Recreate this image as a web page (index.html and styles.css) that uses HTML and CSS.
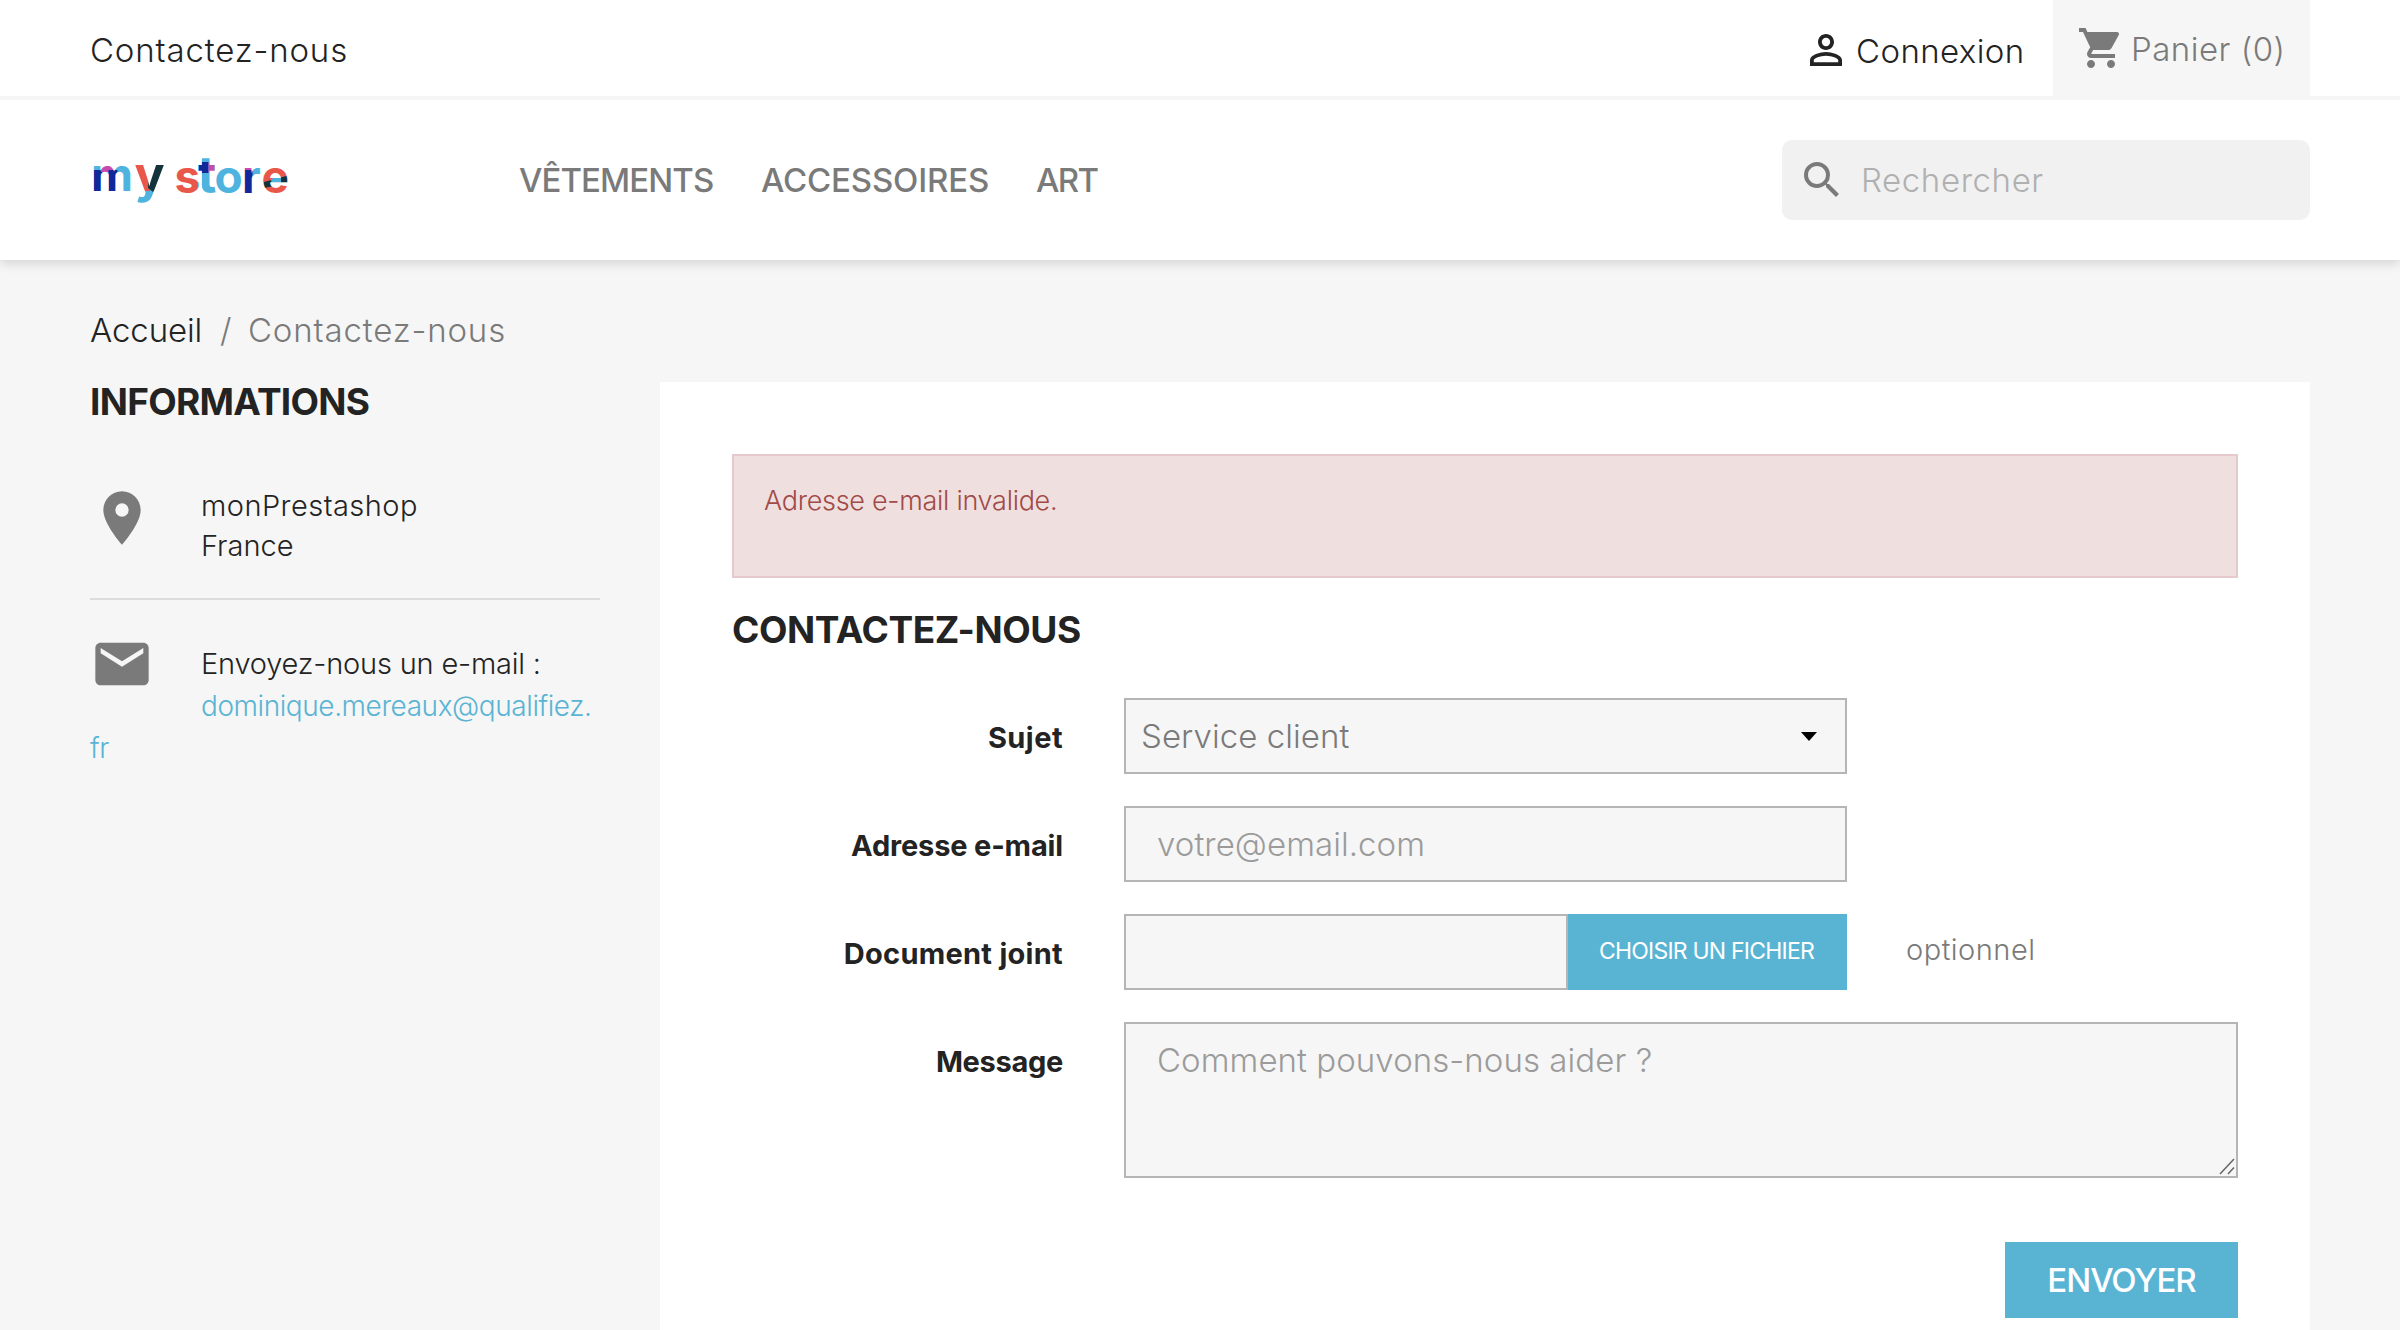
FILE: index.html
```html
<!DOCTYPE html>
<html lang="fr">
<head>
<meta charset="utf-8">
<title>Contactez-nous</title>
<link rel="stylesheet" href="styles.css">
</head>
<body>
<header class="header">
  <nav class="topbar">
    <a class="topbar-contact">Contactez-nous</a>
    <div class="topbar-right">
      <a class="login">
        <svg class="icon" viewBox="0 0 24 24"><path d="M12 5.9a2.1 2.1 0 1 1 0 4.2 2.1 2.1 0 0 1 0-4.2m0 9c2.97 0 6.1 1.46 6.1 2.1v1.1H5.9V17c0-.64 3.13-2.1 6.1-2.1M12 4C9.79 4 8 5.79 8 8s1.79 4 4 4 4-1.79 4-4-1.79-4-4-4zm0 9c-2.67 0-8 1.34-8 4v3h16v-3c0-2.66-5.33-4-8-4z"/></svg>
        <span class="login-text">Connexion</span>
      </a>
      <div class="cart">
        <svg class="icon" viewBox="0 0 24 24"><path d="M7 18c-1.1 0-1.99.9-1.99 2S5.9 22 7 22s2-.9 2-2-.9-2-2-2zM1 2v2h2l3.6 7.59-1.35 2.45c-.16.28-.25.61-.25.96 0 1.1.9 2 2 2h12v-2H7.42c-.14 0-.25-.11-.25-.25l.03-.12.9-1.63h7.45c.75 0 1.41-.41 1.75-1.03l3.58-6.49A1.003 1.003 0 0 0 20 4H5.21l-.94-2H1zm16 16c-1.1 0-1.99.9-1.99 2s.89 2 1.99 2 2-.9 2-2-.9-2-2-2z"/></svg>
        <span class="cart-text">Panier (0)</span>
      </div>
    </div>
  </nav>
  <div class="header-main">
    <a class="logo">
      <svg width="230" height="100" viewBox="-10 -20 230 100" role="img">
        <defs>
          <pattern id="ink" patternUnits="userSpaceOnUse" x="-10" y="-20" width="230" height="100">
            <g transform="translate(10 20)">
            <rect x="-10" y="-20" width="230" height="100" fill="#4fb3df"/>
            <rect x="3.500" y="20" width="9" height="24" fill="#10289a"/>
            <rect x="11" y="12" width="12" height="10" fill="#c64bb0"/>
            <rect x="18.500" y="20" width="9" height="24" fill="#10289a"/>
            <rect x="44" y="12" width="16" height="29" fill="#e9564a"/>
            <path d="M60 12h14v14L63 42l-5-4z" fill="#14343b"/>
            <rect x="84" y="10" width="24" height="36" fill="#e9564a"/>
            <rect x="109" y="12" width="9.500" height="11" fill="#10289a"/>
            <rect x="118.500" y="12" width="6" height="11" fill="#c64bb0"/>
            <rect x="152" y="12" width="10.500" height="8" fill="#c64bb0"/>
            <rect x="152" y="20" width="10.500" height="26" fill="#10289a"/>
            <rect x="172.500" y="12" width="32" height="36" fill="#e9564a"/>
            <path d="M174 32l26-7v8l-26 5z" fill="#14343b"/>
            <path d="M181 29l10-3v8l-9 3z" fill="#4fb3df"/>
            </g>
          </pattern>
        </defs>
        <text class="logo-text" y="40.7" fill="url(#ink)"><tspan x="1">m</tspan><tspan x="44.500" class="logo-y" y="42">y</tspan><tspan x="84.500" y="42.500">s</tspan><tspan x="107.500" y="42.500" class="logo-t">t</tspan><tspan x="124.500" y="42.500">o</tspan><tspan x="152" y="42.500">r</tspan><tspan x="171.500" y="43">e</tspan></text>
      </svg>
    </a>
    <nav class="menu">
      <a class="menu-clothes">VÊTEMENTS</a>
      <a class="menu-accessories">ACCESSOIRES</a>
      <a class="menu-art">ART</a>
    </nav>
    <form class="search">
      <svg class="icon" viewBox="0 0 24 24"><path d="M15.5 14h-.79l-.28-.27A6.471 6.471 0 0 0 16 9.5 6.5 6.5 0 1 0 9.5 16c1.61 0 3.09-.59 4.23-1.57l.27.28v.79l5 4.99L20.49 19l-4.99-5zm-6 0C7.01 14 5 11.99 5 9.5S7.01 5 9.5 5 14 7.01 14 9.5 11.99 14 9.5 14z"/></svg>
      <input class="search-input" type="text" placeholder="Rechercher">
    </form>
  </div>
</header>

<div class="breadcrumb"><a class="crumb-home">Accueil</a><span class="crumb-sep">/</span><span class="crumb-here">Contactez-nous</span></div>

<div class="columns">
  <aside class="sidebar">
    <h4 class="sidebar-title">INFORMATIONS</h4>
    <div class="address">
      <svg class="big-icon" viewBox="0 0 24 24"><path d="M12 2C8.13 2 5 5.13 5 9c0 5.25 7 13 7 13s7-7.75 7-13c0-3.87-3.13-7-7-7zm0 9.500a2.5 2.5 0 0 1 0-5 2.5 2.5 0 0 1 0 5z"/></svg>
      <div class="address-text"><span class="shop">monPrestashop</span><br>France</div>
    </div>
    <div class="email">
      <svg class="big-icon email-icon" viewBox="0 0 24 24"><path d="M20 4H4c-1.1 0-1.99.9-1.99 2L2 18c0 1.100.9 2 2 2h16c1.100 0 2-.9 2-2V6c0-1.100-.9-2-2-2zm0 4l-8 5-8-5V6l8 5 8-5v2z"/></svg>
      <div class="email-label">Envoyez-nous un e-mail :</div>
      <a class="email-link">dominique.mereaux@qualifiez.<br>fr</a>
    </div>
  </aside>

  <main class="content">
    <div class="alert">Adresse e-mail invalide.</div>
    <h3 class="title">CONTACTEZ-NOUS</h3>
    <form class="form">
      <div class="row">
        <label class="label label-subject">Sujet</label>
        <div class="select">
          <span class="select-value">Service client</span>
          <svg class="caret" width="16" height="9" viewBox="0 0 16 9"><path d="M0 0h16L8 9z"/></svg>
        </div>
      </div>
      <div class="row">
        <label class="label label-email">Adresse e-mail</label>
        <input class="field" type="text" placeholder="votre@email.com">
      </div>
      <div class="row">
        <label class="label label-file">Document joint</label>
        <div class="file">
          <span class="file-name"></span>
          <span class="file-button">CHOISIR UN FICHIER</span>
        </div>
        <span class="optional">optionnel</span>
      </div>
      <div class="row">
        <label class="label label-message">Message</label>
        <div class="message">
          <textarea class="field textarea" placeholder="Comment pouvons-nous aider ?"></textarea>
          <svg class="grip" width="16" height="17" viewBox="0 0 16 17"><path d="M1 16L15 1M9 16l6-6.500" fill="none" stroke="#666" stroke-width="1.500"/></svg>
        </div>
      </div>
      <div class="actions"><button class="submit" type="button">ENVOYER</button></div>
    </form>
  </main>
</div>
</body>
</html>
```
FILE: styles.css
```css
* { box-sizing: border-box; }

body {
  margin: 0;
  height: 1330px;
  overflow: hidden;
  background: #f6f6f6;
  color: #232323;
  font-family: Inter, "Liberation Sans", sans-serif;
  font-size: 33px;
  font-weight: 300;
  line-height: 40px;
}

h3, h4 {
  margin: 0;
  font-size: 37px;
  font-weight: 650;
}

/* Header */
.header {
  height: 260px;
  background: #fff;
  box-shadow: 0 4px 10px rgba(0, 0, 0, .13);
}

.topbar {
  display: flex;
  justify-content: space-between;
  height: 100px;
  padding: 0 90px;
  border-bottom: 4px solid #f6f6f6;
}

.topbar-contact {
  padding-top: 30px;
  letter-spacing: .85px;
}

.topbar-right { display: flex; }

.icon {
  display: block;
  flex: none;
  width: 48px;
  height: 48px;
  fill: #7a7a7a;
}

.login {
  display: flex;
  width: 251px;
  padding-top: 26px;
}

.login .icon { fill: #232323; }

.login-text {
  padding: 5px 0 0 6px;
  letter-spacing: .4px;
}

.cart {
  display: flex;
  width: 257px;
  height: 100px;
  padding: 24px 0 0 24px;
  background: #f6f6f6;
  color: #7a7a7a;
}

.cart-text {
  padding: 5px 0 0 6px;
  letter-spacing: .5px;
  white-space: nowrap;
}

.header-main {
  display: flex;
  align-items: center;
  height: 160px;
  padding: 0 90px 0 80px;
}

.logo {
  display: block;
  width: 439px;
  height: 100px;
}

.logo svg { display: block; }

.logo-text {
  font-family: Inter, sans-serif;
  font-size: 46px;
  font-weight: 750;
}

.logo-y { font-size: 50px; }
.logo-t { font-size: 52px; font-weight: 700; }

.menu {
  display: flex;
  gap: 48px;
  flex: 1;
  color: #7a7a7a;
  font-weight: 500;
}

.menu-clothes { width: 194px; letter-spacing: -.91px; }
.menu-accessories { width: 227px; letter-spacing: -.17px; }
.menu-art { letter-spacing: -1.6px; }

.search {
  display: flex;
  align-items: center;
  width: 528px;
  height: 80px;
  padding: 0 16px;
  border-radius: 10px;
  background: #f1f1f1;
}

.search-input {
  flex: 1;
  min-width: 0;
  padding: 0 0 0 15px;
  border: 0;
  background: none;
  font: inherit;
  letter-spacing: .6px;
}

.search-input::placeholder { color: #b0b0b0; opacity: 1; }

/* Breadcrumb */
.breadcrumb {
  display: flex;
  height: 122px;
  padding: 50px 90px 0;
  color: #7a7a7a;
}

.crumb-home { width: 130px; color: #232323; letter-spacing: -.1px; }
.crumb-sep { width: 28px; }
.crumb-here { letter-spacing: .85px; }

/* Columns */
.columns {
  display: grid;
  grid-template-columns: 510px 1650px;
  column-gap: 60px;
  padding: 0 90px;
}

.sidebar { font-size: 29px; }

.sidebar-title {
  margin-bottom: 65px;
  line-height: 39px;
  letter-spacing: -.72px;
}

.big-icon {
  flex: none;
  width: 64px;
  height: 64px;
  fill: #7a7a7a;
}

.address {
  display: flex;
  gap: 47px;
  height: 114px;
  border-bottom: 2px solid #dcdcdc;
}

.address-text { font-weight: 350; }
.shop { letter-spacing: .45px; }

.email {
  padding-top: 43px;
  line-height: 42px;
}

.email-icon {
  float: left;
  margin: -11px 47px 24px 0;
}

.email-label {
  font-weight: 350;
  letter-spacing: -.2px;
  white-space: nowrap;
}

.email-link {
  color: #59b4d4;
  font-size: 28px;
  letter-spacing: -.43px;
}

/* Contact form */
.content {
  height: 960px;
  padding: 72px;
  background: #fff;
}

.alert {
  height: 124px;
  padding: 25px 30px;
  border: 2px solid #e6c9cc;
  background: #f0dfdf;
  color: #a14b48;
  font-size: 27px;
  letter-spacing: -.29px;
}

.title {
  margin: 30px 0 47px;
  line-height: 43px;
  letter-spacing: -.42px;
}

.form {
  display: flex;
  flex-direction: column;
  gap: 32px;
}

.row { display: flex; }

.label {
  width: 331px;
  margin-right: 61px;
  padding-top: 20px;
  font-size: 29px;
  font-weight: 650;
  text-align: right;
}

.label-subject { letter-spacing: .46px; }
.label-email { letter-spacing: -.16px; }
.label-file { letter-spacing: .28px; }
.label-message { letter-spacing: -.3px; }

.select,
.field {
  width: 723px;
  height: 76px;
  border: 2px solid #b5b5b5;
  border-radius: 0;
  background: #f6f6f6;
  color: #7a7a7a;
  font: inherit;
  letter-spacing: .06px;
}

.select {
  display: flex;
  align-items: center;
  justify-content: space-between;
  padding: 0 28px 0 15px;
}

.field { padding: 0 31px; }
.field::placeholder { color: #9b9b9b; opacity: 1; }

.file {
  display: flex;
  width: 723px;
  height: 76px;
}

.file-name {
  width: 444px;
  border: 2px solid #b5b5b5;
  background: #f6f6f6;
}

.file-button {
  flex: 1;
  padding: 17px 0 0 31px;
  background: #59b4d4;
  color: #fff;
  font-size: 23px;
  font-weight: 400;
  letter-spacing: -.79px;
}

.optional {
  padding: 16px 0 0 59px;
  color: #7a7a7a;
  font-size: 29px;
  letter-spacing: .5px;
}

.message {
  position: relative;
  width: 1114px;
  height: 156px;
}

.textarea {
  display: block;
  width: 100%;
  height: 100%;
  padding-top: 16px;
  resize: none;
}

.grip {
  position: absolute;
  right: 3px;
  bottom: 3px;
}

.actions {
  display: flex;
  justify-content: flex-end;
  margin-top: 32px;
}

.submit {
  width: 233px;
  height: 76px;
  padding: 0;
  border: 0;
  background: #59b4d4;
  color: #fff;
  font: inherit;
  font-weight: 500;
  letter-spacing: -1px;
}
```
